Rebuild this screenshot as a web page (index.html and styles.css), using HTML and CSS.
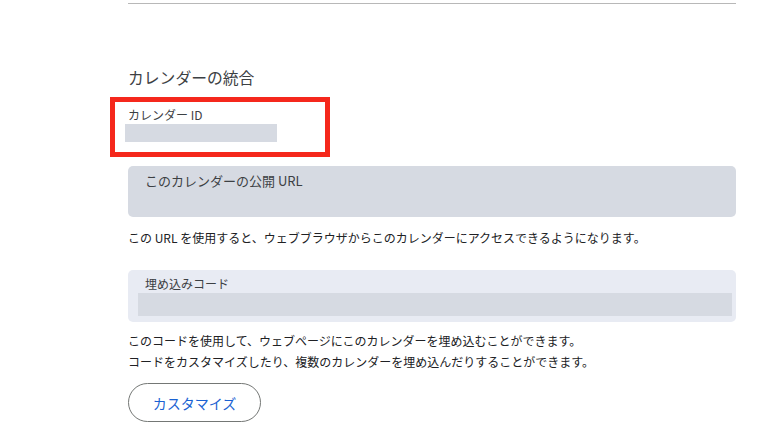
FILE: index.html
```html
<!DOCTYPE html>
<html lang="ja">
<head>
    <meta charset="UTF-8">
    <meta name="viewport" content="width=device-width, initial-scale=1.0">
    <title>カレンダーの統合</title>
    <link rel="stylesheet" href="styles.css">
</head>
<body>
    <div class="panel">
        <hr class="divider">

        <h2 class="section-title">カレンダーの統合</h2>

        <div class="highlight">
            <div class="field-label">カレンダー ID</div>
            <div class="id-bar"></div>
        </div>

        <div class="url-box">
            <div class="box-label">このカレンダーの公開 URL</div>
        </div>
        <p class="hint">この URL を使用すると、ウェブブラウザからこのカレンダーにアクセスできるようになります。</p>

        <div class="embed-box">
            <div class="box-label">埋め込みコード</div>
            <div class="code-bar"></div>
        </div>
        <p class="hint first">このコードを使用して、ウェブページにこのカレンダーを埋め込むことができます。</p>
        <p class="hint">コードをカスタマイズしたり、複数のカレンダーを埋め込んだりすることができます。</p>

        <button type="button" class="customize">カスタマイズ</button>
    </div>
</body>
</html>
```

FILE: styles.css
```css
body {
    margin: 0;
    font-family: "Noto Sans CJK JP", "Noto Sans", sans-serif;
    color: #3c4043;
    background: #fff;
}
.panel {
    width: 608px;
    margin-left: 128px;
    padding-top: 3px;
}
.divider {
    margin: 0;
    border: none;
    border-top: 1px solid #b8b8b8;
}
.section-title {
    margin: 62px 0 0;
    font-size: 15.8px;
    font-weight: normal;
    line-height: 24px;
    color: #3c4043;
}
.highlight {
    box-sizing: border-box;
    width: 220px;
    height: 60px;
    margin: 7px 0 0 -18px;
    padding: 4px 0 0 10px;
    border: 5px solid #f5281c;
}
.field-label {
    padding-left: 3px;
    font-size: 12px;
    line-height: 18px;
}
.id-bar {
    width: 152px;
    height: 18px;
    background: #d6dae2;
}
.url-box {
    height: 51px;
    margin-top: 9px;
    padding: 6px 17px 0;
    box-sizing: border-box;
    background: #d6dae2;
    border-radius: 5px;
}
.box-label {
    font-size: 13px;
    line-height: 18px;
}
.hint {
    margin: 11px 0 0;
    font-size: 12px;
    line-height: 20px;
    color: #202124;
}
.embed-box {
    margin-top: 22px;
    padding: 5px 4px 6px 10px;
    background: #e8ebf3;
    border-radius: 5px;
}
.embed-box .box-label {
    padding-left: 7px;
    font-size: 12px;
}
.code-bar {
    height: 23px;
    background: #d6dae2;
}
.hint.first {
    margin-top: 9px;
}
.hint.first + .hint {
    margin-top: 1px;
}
.customize {
    display: block;
    width: 133px;
    height: 39px;
    margin-top: 11px;
    background: #fff;
    border: 1px solid #747775;
    border-radius: 20px;
    font-family: inherit;
    font-size: 14px;
    color: #1a62d2;
    cursor: pointer;
}
```
